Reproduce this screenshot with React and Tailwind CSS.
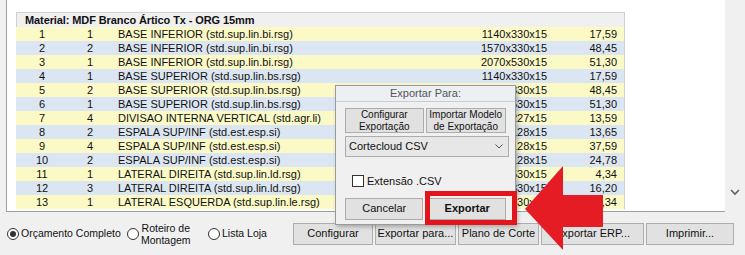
import React from "react";

const rows = [
  ["1", "1", "BASE INFERIOR (std.sup.lin.bi.rsg)", "1140x330x15", "17,59"],
  ["2", "2", "BASE INFERIOR (std.sup.lin.bi.rsg)", "1570x330x15", "48,45"],
  ["3", "1", "BASE INFERIOR (std.sup.lin.bi.rsg)", "2070x530x15", "51,30"],
  ["4", "1", "BASE SUPERIOR (std.sup.lin.bs.rsg)", "1140x330x15", "17,59"],
  ["5", "2", "BASE SUPERIOR (std.sup.lin.bs.rsg)", "1570x330x15", "48,45"],
  ["6", "1", "BASE SUPERIOR (std.sup.lin.bs.rsg)", "2070x530x15", "51,30"],
  ["7", "4", "DIVISAO INTERNA VERTICAL (std.agr.li)", "500x227x15", "13,59"],
  ["8", "2", "ESPALA SUP/INF (std.est.esp.si)", "1066x128x15", "13,65"],
  ["9", "4", "ESPALA SUP/INF (std.est.esp.si)", "1466x128x15", "37,59"],
  ["10", "2", "ESPALA SUP/INF (std.est.esp.si)", "1966x128x15", "24,78"],
  ["11", "1", "LATERAL DIREITA (std.sup.lin.ld.rsg)", "450x530x15", "4,34"],
  ["12", "3", "LATERAL DIREITA (std.sup.lin.ld.rsg)", "450x330x15", "16,20"],
  ["13", "1", "LATERAL ESQUERDA (std.sup.lin.le.rsg)", "450x530x15", "4,34"],
];

function Radio({ checked }) {
  return (
    <span className="w-[12px] h-[12px] rounded-full border border-[#333] bg-white flex items-center justify-center shrink-0">
      {checked && <span className="w-[6px] h-[6px] rounded-full bg-[#333]" />}
    </span>
  );
}

function Btn({ children, className = "" }) {
  return (
    <div className={"h-[22px] bg-[#e1e1e1] border border-[#adadad] flex items-center justify-center text-[#111] whitespace-nowrap " + className}>
      {children}
    </div>
  );
}

export default function App() {
  return (
    <div className="w-[745px] h-[255px] bg-[#f0f0f0] relative overflow-hidden text-[11px] text-[#111]" style={{ fontFamily: '"Liberation Sans", Arial, sans-serif' }}>
      <div className="flex h-[212px]">
        <div className="ml-[6px] w-[719px] bg-white border-l border-b border-[#a0a0a0] pt-[12px] pl-[9px]">
          <div className="w-[609px] border-r border-[#d0d0d0]">
            <div className="h-[15px] bg-[#f0f0f0] border-t border-l border-[#d0d0d0] pl-[8px] font-bold leading-[14px] text-[#111] tracking-[-0.1px]">
              Material: MDF Branco Ártico Tx - ORG 15mm
            </div>
            {rows.map((r, i) => (
              <div key={i} className={"flex h-[14px] leading-[14px] " + (i % 2 === 0 ? "bg-[#fbf9c6]" : "bg-[#dce6f2]")}>
                <div className="w-[52px] text-center">{r[0]}</div>
                <div className="w-[44px] text-center">{r[1]}</div>
                <div className="flex-1 pl-[6px] whitespace-nowrap">{r[2]}</div>
                <div className="w-[100px] text-right">{r[3]}</div>
                <div className="w-[77px] text-right pr-[7px]">{r[4]}</div>
              </div>
            ))}
          </div>
        </div>
        <div className="w-[20px] flex flex-col justify-end items-center pb-[16px]">
          <svg width="10" height="7" viewBox="0 0 10 7">
            <path d="M1 1 L5 5 L9 1" fill="none" stroke="#606060" strokeWidth="1.6" />
          </svg>
        </div>
      </div>

      <div className="flex items-center h-[43px] pl-[7px] text-[10.5px]">
        <div className="flex items-center gap-[2px] w-[120px]">
          <Radio checked />
          <span className="whitespace-nowrap">Orçamento Completo</span>
        </div>
        <div className="flex items-center gap-[2px] w-[81px]">
          <Radio />
          <span className="leading-[12px] text-center">Roteiro de<br />Montagem</span>
        </div>
        <div className="flex items-center gap-[2px] w-[85px]">
          <Radio />
          <span>Lista Loja</span>
        </div>
        <div className="flex gap-[2px] text-[11px]">
          <Btn className="w-[80px]">Configurar</Btn>
          <Btn className="w-[81px]">Exportar para...</Btn>
          <Btn className="w-[81px]">Plano de Corte</Btn>
          <Btn className="w-[103px]">Exportar ERP...</Btn>
          <Btn className="w-[88px]">Imprimir...</Btn>
        </div>
      </div>

      <div className="absolute left-[335px] top-[85px] w-[181px] h-[140px] bg-[#f0f0f0] border border-[#9a9a9a] shadow-[2px_2px_4px_rgba(0,0,0,0.25)]">
        <div className="h-[16px] bg-[#eceff4] border-b border-[#c8ccd4] flex items-center justify-center text-[#555]">
          Exportar Para:
        </div>
        <div className="px-[9px] pt-[6px]">
          <div className="flex gap-[2px] text-[10px]">
            <Btn className="w-[80px] h-[25px] leading-[12px] text-center">Configurar<br />Exportação</Btn>
            <Btn className="w-[82px] h-[25px] leading-[12px] text-center">Importar Modelo<br />de Exportação</Btn>
          </div>
          <div className="mt-[3px] h-[21px] w-[164px] bg-[#e7e7e7] border border-[#adadad] flex items-center justify-between pl-[3px] pr-[5px]">
            <span>Cortecloud CSV</span>
            <svg width="8" height="5" viewBox="0 0 8 5">
              <path d="M0.5 0.5 L4 4 L7.5 0.5" fill="none" stroke="#555" strokeWidth="1" />
            </svg>
          </div>
          <div className="mt-[16px] flex items-center gap-[3px] pl-[7px]">
            <span className="w-[12px] h-[12px] bg-white border border-[#333]" />
            <span>Extensão .CSV</span>
          </div>
          <div className="mt-[8px] flex gap-[5px]">
            <Btn className="w-[80px] h-[21px]">Cancelar</Btn>
            <Btn className="w-[79px] h-[21px] font-bold">Exportar</Btn>
          </div>
        </div>
        <div className="absolute left-[89px] top-[105px] w-[92px] h-[34px] border-[5px] border-[#e3141b]" />
      </div>

      <svg className="absolute left-[520px] top-[161px]" width="90" height="92" viewBox="0 0 90 92">
        <path d="M5 48 L43 5 L43 34 L83 34 L83 66 L43 66 L43 89 Z" fill="#e51c23" />
      </svg>
    </div>
  );
}
